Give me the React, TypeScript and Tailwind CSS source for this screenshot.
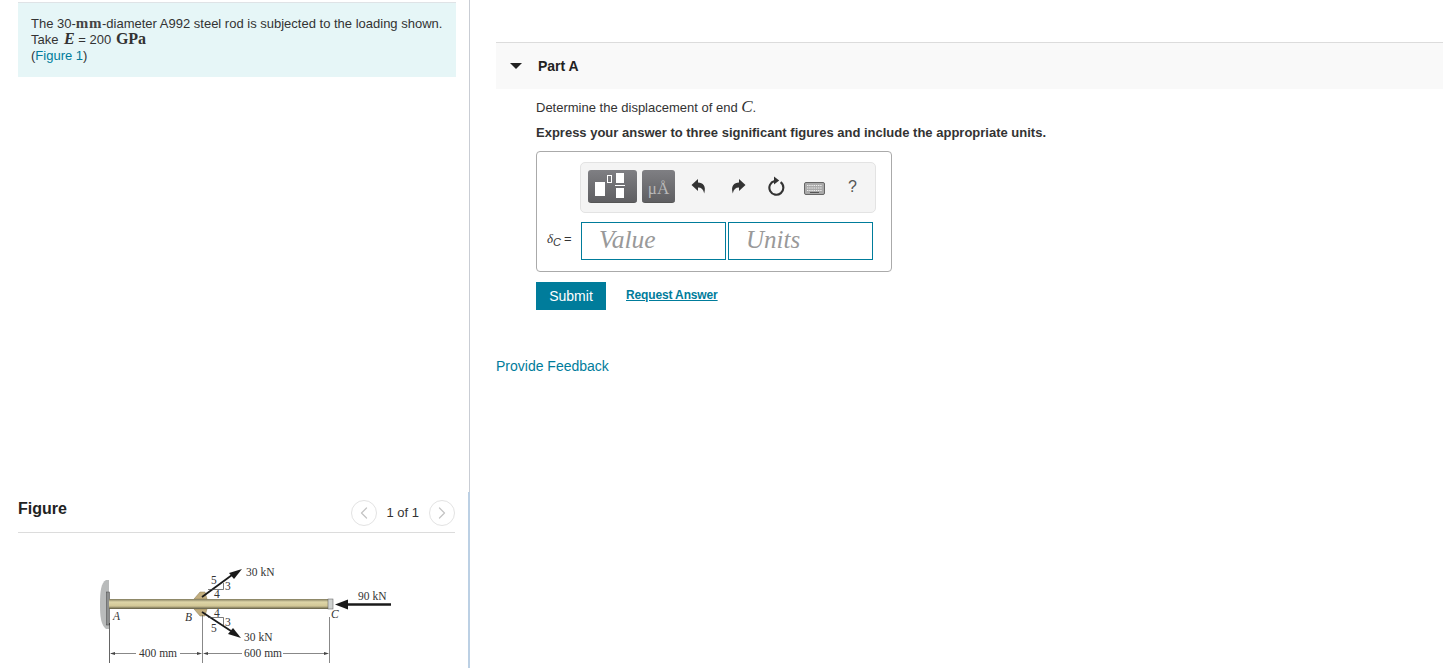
import { ChevronLeft, ChevronRight } from "lucide-react";

const sans = "font-['Liberation_Sans',Arial,sans-serif]";
const math = "font-['Liberation_Serif','Times_New_Roman',serif]";

const RodFigure = () => (
  <svg width="310" height="113" viewBox="0 0 310 113" className="block">
    <defs>
      <linearGradient id="rod" x1="0" y1="0" x2="0" y2="1">
        <stop offset="0" stopColor="#7f7a5c" />
        <stop offset="0.3" stopColor="#ded5a8" />
        <stop offset="0.7" stopColor="#d2c796" />
        <stop offset="1" stopColor="#5e5a44" />
      </linearGradient>
    </defs>
    {/* wall */}
    <path d="M16 25 C11 28 10 36 10 50 C10 62 11 70 16 74 L19 74 L19 25 Z" fill="#b9bbbb" />
    <rect x="16.5" y="37" width="3" height="33" fill="#8d8f8f" stroke="#444" strokeWidth="0.5" />
    <path d="M19 44 L22 49 L19 54 Z" fill="#333" />
    {/* gusset plates */}
    <path d="M104 44 L110 37 L115 37 L117 44 Z" fill="#c2ae7e" stroke="#8a7a55" strokeWidth="0.5" />
    <path d="M104 54 L110 61 L115 61 L117 54 Z" fill="#c2ae7e" stroke="#8a7a55" strokeWidth="0.5" />
    {/* rod */}
    <rect x="19" y="44" width="219" height="10" fill="url(#rod)" />
    <rect x="238" y="44" width="5" height="10" fill="#cfd2d0" stroke="#555" strokeWidth="0.5" />
    {/* dimension lines */}
    <g stroke="#555" strokeWidth="0.7" fill="none">
      <path d="M19.5 68 L19.5 108" stroke="#222" />
      <path d="M112.5 60 L112.5 108" />
      <path d="M239.5 62 L239.5 108" />
      <path d="M21 98.5 L46 98.5 M90 98.5 L110 98.5 M115 98.5 L152 98.5 M193 98.5 L237 98.5" />
    </g>
    <g fill="#444">
      <path d="M20 98.5 L25 97 L25 100 Z" />
      <path d="M112 98.5 L107 97 L107 100 Z" />
      <path d="M113 98.5 L118 97 L118 100 Z" />
      <path d="M239 98.5 L234 97 L234 100 Z" />
    </g>
    {/* 30 kN forces */}
    <path d="M112 42 L142 20" stroke="#1a1a1a" strokeWidth="1.8" />
    <path d="M152 14 L139 18 L144 24 Z" fill="#1a1a1a" />
    <path d="M112 57 L141 76" stroke="#1a1a1a" strokeWidth="1.8" />
    <path d="M151 83 L138 79 L143 73 Z" fill="#1a1a1a" />
    {/* 90 kN force */}
    <path d="M255 49.5 L301 49.5" stroke="#1a1a1a" strokeWidth="2.4" />
    <path d="M245 49.5 L258 44.5 L258 54.5 Z" fill="#1a1a1a" />
    {/* slope triangles */}
    <path d="M118 34.5 L133.5 34.5 L133.5 28" stroke="#444" strokeWidth="0.7" fill="none" />
    <path d="M118 62.5 L133.5 62.5 L133.5 70" stroke="#444" strokeWidth="0.7" fill="none" />
    <g className={math} fontSize="11.5" fill="#333">
      <text x="124" y="43">4</text>
      <text x="124" y="61.5">4</text>
      <text x="135" y="34.5">3</text>
      <text x="135" y="70.5">3</text>
      <text x="121" y="29">5</text>
      <text x="121" y="76.5">5</text>
      <text x="156" y="21">30 kN</text>
      <text x="154" y="86">30 kN</text>
      <text x="268" y="45">90 kN</text>
      <text x="49" y="102">400 mm</text>
      <text x="154" y="102">600 mm</text>
      <text x="23" y="65" fontStyle="italic">A</text>
      <text x="95" y="66" fontStyle="italic">B</text>
      <text x="241" y="63" fontStyle="italic">C</text>
    </g>
  </svg>
);

const TemplateIcon = () => (
  <div className="w-[49px] h-[33px] rounded-[3px] bg-gradient-to-b from-[#7f7f83] to-[#5f5f62] border-b border-[#555] flex items-start pl-[7px]">
    <div className="w-[10px] h-[14px] bg-white mt-[12px]" />
    <div className="w-[5px] h-[8px] border border-white ml-[2px] mt-[5px]" />
    <div className="flex flex-col items-center gap-[2px] ml-[3px] mt-[3px]">
      <div className="w-[8px] h-[10px] bg-white" />
      <div className="w-[10px] h-[1px] bg-white" />
      <div className="w-[8px] h-[10px] bg-white" />
    </div>
  </div>
);

const Undo = ({ flip }: { flip?: boolean }) => (
  <svg width="16" height="17" viewBox="0 0 16 17" className={flip ? "-scale-x-100" : ""}>
    <path d="M0.5 7 L7 1 L7 4.6 C12 4.6 15.5 8 13.2 15.5 C12.4 11.6 10.4 9.6 7 9.6 L7 13 Z" fill="#333" />
  </svg>
);

const Reset = () => (
  <svg width="18" height="20" viewBox="0 0 18 20" fill="none">
    <path d="M13.6 6.2 A7 7 0 1 1 7.6 5" stroke="#333" strokeWidth="2.1" />
    <path d="M7 0.5 L12.2 4.6 L7 8.6 Z" fill="#333" />
  </svg>
);

const Keyboard = () => (
  <svg width="21" height="13" viewBox="0 0 21 13">
    <rect x="0.5" y="0.5" width="20" height="12" rx="1.5" fill="#a9a9a9" stroke="#666" />
    <path d="M3 3.5 H18 M3 6 H18 M3 8.5 H18" stroke="#eeeeee" strokeWidth="1.2" strokeDasharray="1.4 0.8" />
    <path d="M6 10.5 H15" stroke="#555" />
  </svg>
);

export default function App() {
  return (
    <div className={`w-[1443px] h-[668px] overflow-hidden bg-white flex text-[14px] text-[#333] ${sans}`}>
      <div className="w-[470px] h-full shrink-0 relative border-r border-[#c9cdd4] pl-[18px] pr-[13px] pt-[2px]">
        <div className="h-[75px] bg-[#e6f6f7] border-t border-[#dfe3e6] pl-[13px] pt-[13px] text-[13px] leading-[16px] whitespace-nowrap">
          <p>
            The 30-<span className={`${math} font-bold text-[#444] text-[15px] tracking-[0.6px] leading-[0]`}>mm</span>-diameter A992 steel rod is subjected to the loading shown.
          </p>
          <p>
            Take <span className={`${math} italic font-bold text-[16px] leading-[0] ml-[2px]`}>E</span> = 200{" "}
            <span className={`${math} font-bold text-[16px] leading-[0] ml-[1px]`}>GPa</span>
          </p>
          <p>
            (<span className="text-[#007c9b]">Figure 1</span>)
          </p>
        </div>

        <div className="mt-[417px] mr-[1px] h-[39px] flex items-center border-b border-[#dcdcdc] pb-[9px]">
          <h2 className="font-bold text-[16px] text-[#222]">Figure</h2>
          <div className="ml-auto flex items-center mt-[7px] mb-[-2px]">
            <span className="w-[26px] h-[26px] rounded-full border border-[#e3e3e3] flex items-center justify-center text-[#c4c4c4]">
              <ChevronLeft size={20} strokeWidth={1.5} />
            </span>
            <span className="ml-[9px] mr-[10px] text-[13px]">1 of 1</span>
            <span className="w-[26px] h-[26px] rounded-full border border-[#e3e3e3] flex items-center justify-center text-[#c4c4c4]">
              <ChevronRight size={20} strokeWidth={1.5} />
            </span>
          </div>
        </div>

        <div className="mt-[22px] ml-[72px]">
          <RodFigure />
        </div>

        {/* scrollbar edge */}
        <div className="absolute right-[-1px] top-[492px] bottom-0 w-[2px] bg-[#bcd0e4]" />
      </div>

      <div className="flex-1 min-w-0 pl-[26px] pt-[42px]">
        <div className="h-[47px] bg-[#f9f9f9] border-t border-[#dcdcdc] flex items-center">
          <span className="ml-[14px] w-0 h-0 border-l-[6px] border-r-[6px] border-t-[6px] border-l-transparent border-r-transparent border-t-[#222]" />
          <span className="ml-[16px] font-bold text-[#222]">Part A</span>
        </div>

        <div className="pl-[40px]">
          <p className="mt-[11px] text-[13px] leading-[16px]">
            Determine the displacement of end <span className={`${math} italic text-[17px] leading-[0]`}>C</span>.
          </p>
          <p className="mt-[9px] text-[13px] leading-[16px] font-bold">
            Express your answer to three significant figures and include the appropriate units.
          </p>

          <div className="mt-[10px] w-[356px] h-[121px] border border-[#aaaaaa] rounded-[4px] pl-[43px] pt-[10px]">
            <div className="w-[296px] h-[51px] bg-[#f4f4f4] border border-[#e3e3e3] rounded-[5px] flex items-center pl-[7px] pb-[2px]">
              <TemplateIcon />
              <div className={`ml-[5px] w-[33px] h-[33px] rounded-[3px] bg-gradient-to-b from-[#7f7f83] to-[#5f5f62] border-b border-[#555] flex items-end justify-center pb-[3px] text-[#b8b8b8] text-[17px] leading-[20px] ${math}`}>
                μÅ
              </div>
              <div className="ml-[16px]"><Undo /></div>
              <div className="ml-[23px]"><Undo flip /></div>
              <div className="ml-[21px] -mt-[1px]"><Reset /></div>
              <div className="ml-[19px] mt-[3px]"><Keyboard /></div>
              <span className="ml-[23px] text-[16px] text-[#555]">?</span>
            </div>

            <div className="relative mt-[9px] ml-[1px] flex gap-[2px]">
              <span className="absolute left-[-34px] top-[9px] text-[13px] leading-[16px] whitespace-nowrap">
                <span className={`${math} italic`}>δ</span>
                <sub className="italic text-[11px]">C</sub>
                <span className="ml-[3px]">=</span>
              </span>
              <div className={`w-[145px] h-[38px] border border-[#007c9b] pl-[17px] pb-[2px] flex items-center italic text-[25.5px] text-[#999] ${math}`}>
                Value
              </div>
              <div className={`w-[145px] h-[38px] border border-[#007c9b] pl-[17px] pb-[2px] flex items-center italic text-[25px] text-[#999] ${math}`}>
                Units
              </div>
            </div>
          </div>

          <div className="mt-[10px] flex items-center">
            <button className="w-[70px] h-[28px] bg-[#007c9b] text-white">Submit</button>
            <a className="ml-[20px] text-[12px] font-bold underline text-[#007c9b] relative -top-[1px] tracking-[-0.14px]">Request Answer</a>
          </div>
        </div>

        <a className="block mt-[48px] leading-[16px] text-[#007c9b]">Provide Feedback</a>
      </div>
    </div>
  );
}
